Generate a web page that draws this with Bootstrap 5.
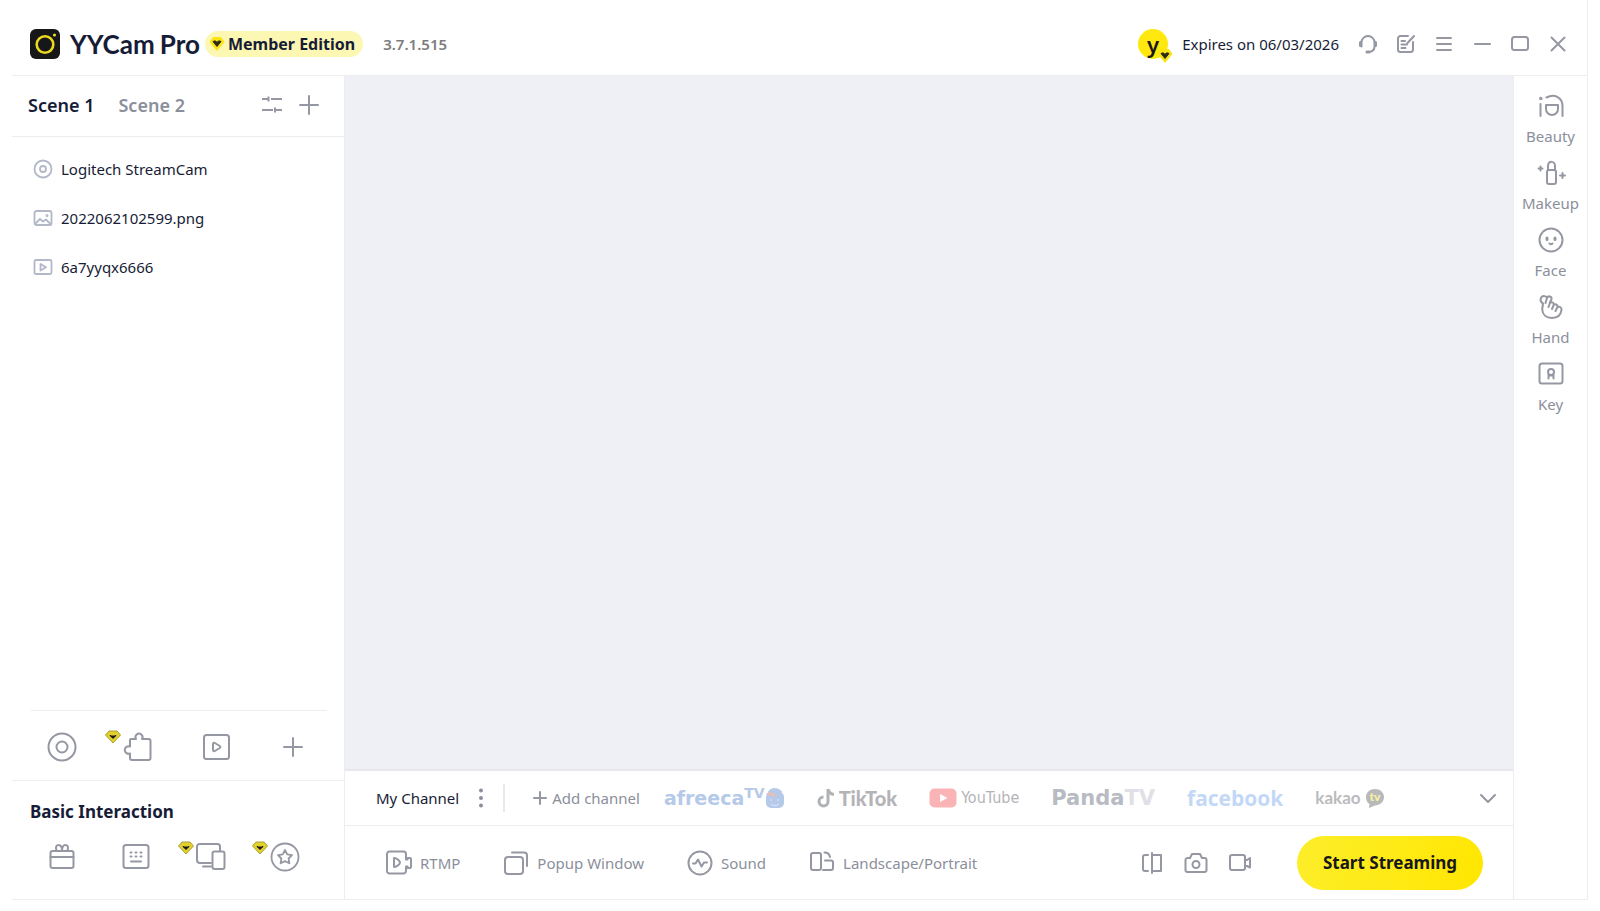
<!DOCTYPE html>
<html lang="en">
<head>
<meta charset="utf-8">
<meta name="viewport" content="width=device-width, initial-scale=1">
<title>YYCam Pro</title>
<link href="https://cdn.jsdelivr.net/npm/bootstrap@5.3.0/dist/css/bootstrap.min.css" rel="stylesheet">
<style>
:root{--ink:#171c36;--soft:#8b8f9b;--line:#ededf0;--stage:#eff0f6}
body{font-family:"Noto Sans","Open Sans",sans-serif;font-size:15px;line-height:20px;color:var(--ink);background:#fff}
button{font:inherit;color:inherit;background:none;border:0;padding:0}
svg{display:block;flex:none}
.ic{fill:none;stroke:currentColor;stroke-width:2;stroke-linecap:round;stroke-linejoin:round;color:#9597a2}
.thin{stroke-width:1.8}
.soft{color:var(--soft)}
.shell{padding:0 12px 11px}
.frame{border-right:1px solid var(--line);border-bottom:1px solid var(--line)}
.topbar{height:76px;border-bottom:1px solid var(--line);padding:12px 10px 0 18px}
.wordmark{font-family:Lato,sans-serif;font-weight:700;font-size:26px;line-height:30px;margin-left:10px;gap:5px}
.pill{background:#fdf7b4;border-radius:13px;height:26px;padding:0 8px 0 4px;margin-left:5px;gap:3px;font-size:16px;font-weight:700}
.version{margin-left:20px;font-weight:600;color:#7c7c80}
.avatar{width:30px;height:30px;border-radius:50%;background:#fee80d;font-size:22px;font-weight:600;line-height:30px;color:#17171d}
.avatar svg{left:19px;top:19px}
.expires{margin:0 10px 0 14px}
.winbtn{width:38px;height:24px}
.side{width:333px;border-right:1px solid var(--line)}
.scenes{height:61px;border-bottom:1px solid var(--line);padding:0 25px 2px 16px;font-size:18px;font-weight:600}
.sources{padding:7px 0}
.sources button{height:49px;padding:0 21px;gap:8px}
.sources .ic{color:#b3b8c8}
.tools{margin:0 17px 0 19px;border-top:1px solid var(--line);height:70px;padding:3px 18px 0 15px}
.basic{border-top:1px solid var(--line);height:119px}
.basic h2{font-size:17px;line-height:24px;font-weight:700;margin:19px 18px 0}
.extras{height:30px;margin:18px 44px 0 35px}
.gem{left:-18px;top:-1px}
.stage{background:var(--stage);border-bottom:2px solid #e7e8ee}
.channels{height:55px;border-bottom:1px solid var(--line);padding:0 16px 0 31px}
.vline{width:2px;height:28px;background:#e8e9ee;margin:0 27px 0 16px}
.brands{margin-left:24px;gap:32px}
.brands button{line-height:28px}
.afr{font-family:"DejaVu Sans",sans-serif;font-weight:700;font-size:19px;color:#b5c9e8}
.afr span{font-size:14px;line-height:18px}
.tik{font-family:Lato,sans-serif;font-weight:900;font-size:20px;color:#b4b4b7}
.tube{font-family:"DejaVu Sans Condensed","DejaVu Sans",sans-serif;font-weight:400;font-size:16px;color:#b4b4b8}
.pan{font-family:"DejaVu Sans",sans-serif;font-weight:700;font-size:21px;color:#b8bbc3}
.pan span{color:#e0e1e6}
.fb{font-family:"Open Sans",sans-serif;font-weight:700;font-size:21px;color:#c2d8f6}
.kk{font-family:Lato,sans-serif;font-weight:700;font-size:17px;color:#bbbbbd}
.actions{height:73px;padding:0 30px 0 41px}
.modes{gap:43px}
.actions .start{width:186px;height:54px;border-radius:27px;background:linear-gradient(110deg,#fdee2b,#ffe600);font-weight:700;font-size:17px;color:#17171d;margin-left:45px}
.rail{width:74px;border-left:1px solid var(--line);padding-top:17px;gap:8px}
.rail button{height:59px;gap:7px}
</style>
</head>
<body>
<svg width="0" height="0" class="position-absolute" aria-hidden="true">
  <symbol id="gem" viewBox="0 0 16 14"><path d="M4 1h8l3.500 4L8 13 .5 5z" fill="#e3d12b" stroke="#a99f3c" stroke-width="1"/><path d="M5 5.500c2 .8 4 .8 6 0L8 8.500z" fill="#17171d" stroke="#17171d" stroke-linejoin="round"/></symbol>
  <symbol id="gemflat" viewBox="0 0 16 16"><path d="M4 1h8l3.500 5L8 15 .5 6z" fill="#fbe416"/><path d="M4 5.500 6 4.800 8 6.200l2-1.400 2 .7L8 10.500z" fill="#2b2a18" stroke="#2b2a18" stroke-linejoin="round"/></symbol>
</svg>
<div class="shell min-vh-100 d-flex flex-column">
<div class="frame flex-fill d-flex flex-column">
  <header class="topbar d-flex align-items-center">
    <svg width="30" height="30" viewBox="0 0 30 30" aria-hidden="true"><rect width="30" height="30" rx="6" fill="#17171a"/><circle cx="15" cy="15.500" r="8.300" fill="none" stroke="#e9d91f" stroke-width="2.600"/><circle cx="24.500" cy="6" r="1.600" fill="#e9d91f"/></svg>
    <span class="wordmark d-flex"><span>YYCam</span><span>Pro</span></span>
    <span class="pill d-flex align-items-center"><svg width="16" height="16" aria-hidden="true"><use href="#gemflat"/></svg>Member Edition</span>
    <span class="version">3.7.1.515</span>
    <span class="avatar position-relative text-center ms-auto">y<svg class="position-absolute" width="16" height="16" aria-hidden="true"><use href="#gemflat"/></svg></span>
    <span class="expires">Expires on 06/03/2026</span>
    <nav class="d-flex soft" aria-label="Window">
      <button class="winbtn d-flex justify-content-center align-items-center" aria-label="Support"><svg class="ic" width="22" height="22" viewBox="0 0 22 22"><path d="M4.500 13.500V9.500a6.500 6.500 0 0 1 13 0v4c0 3-2 5-5.500 5.500"/><path d="M3.500 9.500v3M18.500 9.500v3M10 19h2" stroke-width="3"/></svg></button>
      <button class="winbtn d-flex justify-content-center align-items-center" aria-label="Feedback"><svg class="ic" width="22" height="22" viewBox="0 0 22 22"><path d="M13 3H5.500A2.500 2.500 0 0 0 3 5.500v11A2.500 2.500 0 0 0 5.500 19h10a2.500 2.500 0 0 0 2.500-2.500V9M19 3l-6.500 7M6.500 8H10M6.500 11.500h5.500M6.500 15h4"/></svg></button>
      <button class="winbtn d-flex justify-content-center align-items-center" aria-label="Menu"><svg class="ic" width="22" height="22" viewBox="0 0 22 22"><path d="M4 5h14M4 11h14M4 17h14"/></svg></button>
      <button class="winbtn d-flex justify-content-center align-items-center" aria-label="Minimise"><svg class="ic" width="22" height="22" viewBox="0 0 22 22"><path d="M4 11h15"/></svg></button>
      <button class="winbtn d-flex justify-content-center align-items-center" aria-label="Maximise"><svg class="ic" width="22" height="22" viewBox="0 0 22 22"><rect x="3" y="4" width="16" height="13" rx="2.500"/></svg></button>
      <button class="winbtn d-flex justify-content-center align-items-center" aria-label="Close"><svg class="ic" width="22" height="22" viewBox="0 0 22 22"><path d="m4.500 4.500 13 13m0-13-13 13"/></svg></button>
    </nav>
  </header>
  <div class="flex-fill d-flex">
    <aside class="side flex-shrink-0 d-flex flex-column">
      <div class="scenes d-flex align-items-center">
        <button class="me-4">Scene 1</button>
        <button class="soft">Scene 2</button>
        <button class="ms-auto soft" aria-label="Scene settings"><svg class="ic" width="22" height="22" viewBox="0 0 22 22"><path d="M1 5h6M10 5h11M7.500 2.500v5M1 16h11M15 16h6M14 13.500v5" stroke-linecap="butt"/></svg></button>
        <button class="soft ms-3" aria-label="Add scene"><svg class="ic" width="20" height="20" viewBox="0 0 20 20"><path d="M10 1v18M1 10h18"/></svg></button>
      </div>
      <div class="sources d-flex flex-column">
        <button class="d-flex align-items-center"><svg class="ic thin" width="20" height="20" viewBox="0 0 20 20"><circle cx="10" cy="10" r="8.500"/><circle cx="10" cy="10" r="3"/></svg>Logitech StreamCam</button>
        <button class="d-flex align-items-center"><svg class="ic thin" width="20" height="20" viewBox="0 0 20 20"><rect x="1.500" y="3" width="17" height="14" rx="2"/><path d="m2 16 5-5 3 2.500 3-2 5 5"/><circle cx="14" cy="7.500" r=".6"/></svg>2022062102599.png</button>
        <button class="d-flex align-items-center"><svg class="ic thin" width="20" height="20" viewBox="0 0 20 20"><rect x="1.500" y="3" width="17" height="14" rx="1.500"/><path d="M7.500 7v6.500L13 10.200z"/></svg>6a7yyqx6666</button>
      </div>
      <div class="tools mt-auto d-flex align-items-center justify-content-between soft">
        <button aria-label="Camera"><svg class="ic" width="32" height="32" viewBox="0 0 32 32"><circle cx="16" cy="16" r="13.500"/><circle cx="16" cy="16" r="5.500"/></svg></button>
        <button class="position-relative" aria-label="Plug-ins"><svg class="gem position-absolute" width="16" height="14"><use href="#gem"/></svg><svg class="ic" width="32" height="32" viewBox="0 0 32 32"><path d="M8 8h5a3.500 3.500 0 1 1 6 0h6.500a2 2 0 0 1 2 2v17a2 2 0 0 1-2 2H9a2 2 0 0 1-2-2v-4.500a3.800 3.800 0 1 1 0-7V9a1 1 0 0 1 1-1z"/></svg></button>
        <button aria-label="Media"><svg class="ic" width="32" height="32" viewBox="0 0 32 32"><rect x="4" y="4" width="25" height="24" rx="2.500"/><path d="M13 13a1.200 1.200 0 0 1 1.800-1l5 3a1.200 1.200 0 0 1 0 2l-5 3a1.200 1.200 0 0 1-1.800-1z"/></svg></button>
        <button aria-label="More sources"><svg class="ic" width="32" height="32" viewBox="0 0 32 32"><path d="M16 7v18M7 16h18"/></svg></button>
      </div>
      <section class="basic">
        <h2>Basic Interaction</h2>
        <div class="extras d-flex align-items-center justify-content-between soft">
          <button aria-label="Gifts"><svg class="ic" width="30" height="30" viewBox="0 0 30 30"><rect x="3.500" y="9" width="23" height="17" rx="2"/><path d="M3.500 15h23M10 9c-2-3-1-6 1.500-6S15 6 15 9c0-3 1-6 3.500-6S22 6 20 9"/></svg></button>
          <button aria-label="Comments"><svg class="ic" width="30" height="30" viewBox="0 0 30 30"><rect x="2.500" y="3" width="25" height="23" rx="2.500"/><path d="M9.500 10.500h1M14.500 10.500h1M19.500 10.500h1M9.500 14.500h1M14.500 14.500h1M19.500 14.500h1M10 19.500h10"/></svg></button>
          <button class="position-relative" aria-label="Screens"><svg class="gem position-absolute" width="16" height="14"><use href="#gem"/></svg><svg class="ic" width="30" height="30" viewBox="0 0 30 30"><path d="M15 21H4a3 3 0 0 1-3-3V4.500A2.500 2.500 0 0 1 3.500 2h18A2.500 2.500 0 0 1 24 4.500V9M7 24.500h8"/><rect x="16.500" y="9.500" width="12" height="17.500" rx="2"/></svg></button>
          <button class="position-relative" aria-label="Favourites"><svg class="gem position-absolute" width="16" height="14"><use href="#gem"/></svg><svg class="ic thin" width="30" height="30" viewBox="0 0 30 30"><circle cx="15" cy="15" r="13.500"/><path d="m15 8 2.200 4.300 4.800.8-3.400 3.400.8 4.800-4.400-2.200-4.400 2.200.8-4.800L8 13.100l4.800-.8z"/></svg></button>
        </div>
      </section>
    </aside>
    <main class="flex-fill d-flex flex-column">
      <div class="stage flex-fill"></div>
      <div class="channels d-flex align-items-center">
        <span>My Channel</span>
        <button class="soft ms-3" aria-label="Channel options"><svg width="12" height="20" viewBox="0 0 12 20" fill="currentColor"><circle cx="6" cy="2.500" r="2"/><circle cx="6" cy="10" r="2"/><circle cx="6" cy="17.500" r="2"/></svg></button>
        <span class="vline"></span>
        <button class="soft d-flex align-items-center gap-1"><svg class="ic" width="16" height="16" viewBox="0 0 16 16"><path d="M8 2v12M2 8h12"/></svg>Add channel</button>
        <div class="brands d-flex align-items-center">
          <button class="afr d-flex">afreeca<span>TV</span><svg width="20" height="22" viewBox="0 0 20 22" class="align-self-center" aria-hidden="true"><rect x="1" y="5" width="18" height="16" rx="5" fill="#b5c9e8"/><path d="M4 6c3-5 10-4 12 0" fill="#b5c9e8" stroke="#b5c9e8" stroke-width="3"/><path d="M1 7c3-3 7-2 10 1L8 10z" fill="#e4bfb8"/><path d="M6 12v2M13 12v2M6 17c3 2 5 2 8 0" stroke="#dfe8f5" stroke-width="1" fill="none"/></svg></button>
          <button class="tik d-flex align-items-center gap-1"><svg width="18" height="22" viewBox="0 0 18 22" aria-hidden="true"><path d="M11 2v12.500a4.500 4.500 0 1 1-4.500-4.500M11 2c.5 3.500 2.500 5 6 5.500" fill="none" stroke="#b0b3b5" stroke-width="3"/></svg>TikTok</button>
          <button class="tube d-flex align-items-center gap-1"><svg width="28" height="20" viewBox="0 0 28 20" aria-hidden="true"><rect x=".5" y=".5" width="27" height="19" rx="5" fill="#fbb4b6"/><path d="m11 6 7.500 4-7.500 4z" fill="#fff"/></svg>YouTube</button>
          <button class="pan">Panda<span>TV</span></button>
          <button class="fb">facebook</button>
          <button class="kk d-flex align-items-center gap-1">kakao<svg width="20" height="21" viewBox="0 0 20 21" aria-hidden="true"><path d="M10 1c5 0 9 3.500 9 8s-4 8.500-9 8.500L4 20l.5-4C2 14.500 1 12 1 9c0-4.500 4-8 9-8z" fill="#b9b9bb"/><text x="10" y="13" text-anchor="middle" font-family="Lato, sans-serif" font-size="12" font-weight="900" fill="#f7f0a2">tv</text></svg></button>
        </div>
        <button class="soft ms-auto" aria-label="More channels"><svg class="ic" width="18" height="18" viewBox="0 0 18 18"><path d="m2 6 7 7 7-7"/></svg></button>
      </div>
      <div class="actions d-flex align-items-center soft">
        <div class="modes d-flex">
        <button class="d-flex align-items-center gap-2"><svg class="ic" width="26" height="26" viewBox="0 0 26 26"><path d="M20 8V4a2.500 2.500 0 0 0-2.500-2.500h-14A2.500 2.500 0 0 0 1 4v17a2.500 2.500 0 0 0 2.500 2.500h14A2.500 2.500 0 0 0 20 21v-4.500h1.500V18H24a1 1 0 0 0 1-1V9a1 1 0 0 0-1-1h-2.500v1.500H20z"/><path d="M8 8v9c3 0 6-3 6-4.500S11 8 8 8z"/></svg>RTMP</button>
        <button class="d-flex align-items-center gap-2"><svg class="ic" width="26" height="26" viewBox="0 0 26 26"><rect x="2" y="7" width="18" height="17" rx="3"/><path d="M9 2.500h12a3 3 0 0 1 3 3V16"/></svg>Popup Window</button>
        <button class="d-flex align-items-center gap-2"><svg class="ic" width="26" height="26" viewBox="0 0 26 26"><circle cx="13" cy="13" r="11.500"/><path d="M6 13.500h2.500l2.500-4 3.500 7 2.500-4H20"/></svg>Sound</button>
        <button class="d-flex align-items-center gap-2"><svg class="ic" width="26" height="26" viewBox="0 0 26 26"><rect x="2" y="3" width="10" height="17" rx="2"/><path d="M15.500 2.500c3 0 5 2 5.500 4.500M16 10.500h6a2 2 0 0 1 2 2V18a2 2 0 0 1-2 2h-8"/></svg>Landscape/Portrait</button>
        </div>
        <div class="ms-auto d-flex gap-3">
          <button class="ms-1" aria-label="Mirror"><svg class="ic" width="24" height="24" viewBox="0 0 24 24"><path d="M12 2v20M8 4H5a2 2 0 0 0-2 2v12a2 2 0 0 0 2 2h3M12 4h9v16h-9"/></svg></button>
          <button class="ms-1" aria-label="Snapshot"><svg class="ic" width="24" height="24" viewBox="0 0 24 24"><path d="M8 3h8l2 4h2.500A2 2 0 0 1 22.500 9v10a2 2 0 0 1-2 2h-17a2 2 0 0 1-2-2V9a2 2 0 0 1 2-2H6z"/><circle cx="12" cy="13.500" r="3.500"/></svg></button>
          <button class="ms-1" aria-label="Record"><svg class="ic" width="24" height="24" viewBox="0 0 24 24"><rect x="2" y="4" width="15" height="15" rx="2"/><path d="M17 9h2l3-2v9.500L19 15h-2"/></svg></button>
        </div>
        <button class="start">Start Streaming</button>
      </div>
    </main>
    <nav class="rail flex-shrink-0 d-flex flex-column soft" aria-label="Effects">
      <button class="d-flex flex-column align-items-center"><svg class="ic" width="26" height="26" viewBox="0 0 26 26"><path d="M2.500 11v12M8.500 4.500C17 0 24.500 5 24.500 13v10M8 12h12v4a6 6 0 0 1-12 0z"/><circle cx="2.800" cy="5.500" r=".8"/></svg>Beauty</button>
      <button class="d-flex flex-column align-items-center"><svg class="ic" width="30" height="26" viewBox="0 0 30 26"><rect x="11" y="10" width="9" height="14" rx="2"/><path d="M12 10V6c0-6 7-5 7 0v4M4.500 6.500v4M2.500 8.500h4M26.500 13v5M24 15.500h5"/></svg>Makeup</button>
      <button class="d-flex flex-column align-items-center"><svg class="ic" width="26" height="26" viewBox="0 0 26 26"><circle cx="13" cy="13" r="11.500"/><path d="M9 11v1.500M17 11v1.500" stroke-width="3"/><path d="M11.500 16.500q1.500 1.500 3 0"/></svg>Face</button>
      <button class="d-flex flex-column align-items-center"><svg class="ic" width="26" height="26" viewBox="0 0 26 26"><path d="M5 9.500C1 7.500 2.500 2 6 2c1.500 0 2.500 1 3 2 1-2.500 5-2 4.500 1-.3 1.500-1 2.500-1.800 3.800M9 4 7.500 9M10.500 13l1.500-4c1.500-1.500 4-.5 3.700 1.500M14 15l1.700-4c1.500-1.500 4-.5 3.800 1.700M17.500 17l2-4c2-1 4.500.5 4 3.200-.7 4.800-4 7.800-9.500 7.800C8 24 4.500 20.500 4.200 15.500L5 9.500"/></svg>Hand</button>
      <button class="d-flex flex-column align-items-center"><svg class="ic" width="26" height="26" viewBox="0 0 26 26"><rect x="1.500" y="2.500" width="23" height="20" rx="2.500"/><circle cx="13" cy="11" r="3"/><path d="M10.500 14v3.500M15.500 14v3.500M11 14.500h4"/></svg>Key</button>
    </nav>
  </div>
</div>
</div>
<script src="https://cdn.jsdelivr.net/npm/bootstrap@5.3.0/dist/js/bootstrap.bundle.min.js"></script>
</body>
</html>
